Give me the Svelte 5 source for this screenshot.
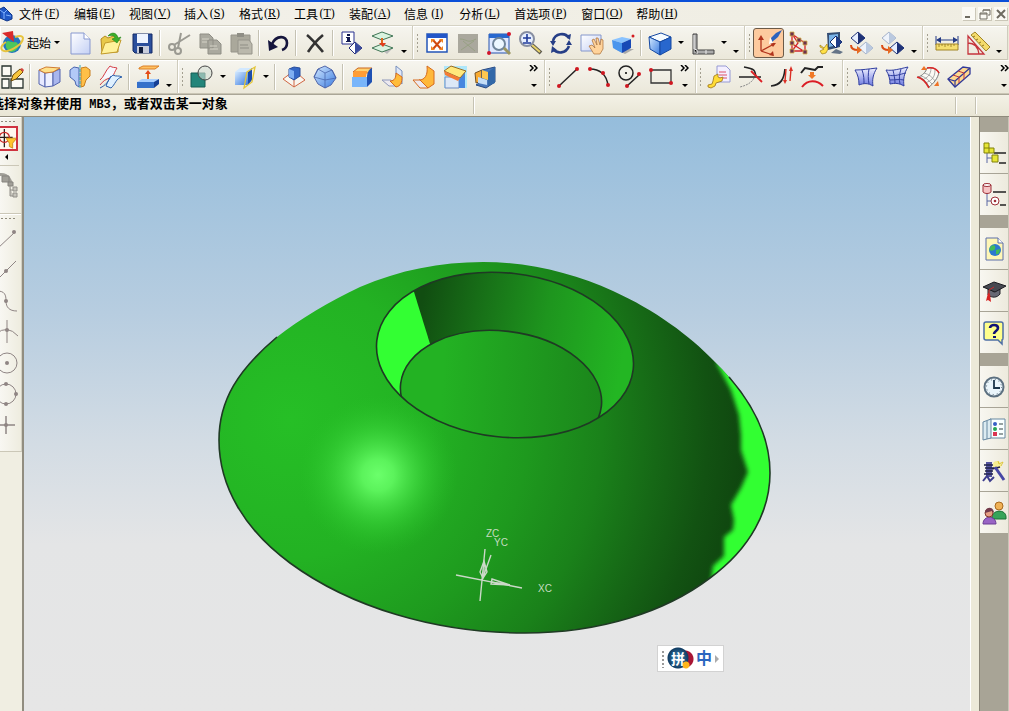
<script>
  const menus = [
    ['文件', 'F'], ['编辑', 'E'], ['视图', 'V'], ['插入', 'S'], ['格式', 'R'], ['工具', 'T'],
    ['装配', 'A'], ['信息', 'I'], ['分析', 'L'], ['首选项', 'P'], ['窗口', 'O'], ['帮助', 'H']
  ];

  // '|' separator, 'v' split arrow, '_' toolbar options, '>>' overflow
  const standardRow = [
    ['start', 'new', 'open', 'save', '|', 'cut', 'copy', 'paste', '|', 'undo', '|', 'delete', '|', 'info', 'layer', '_'],
    ['fit', 'shaded', 'zoomArea', 'zoom', 'rotate', 'pan', 'perspective', '|', 'cube', 'v', 'bracket', 'v', '_'],
    ['wcs', 'constraints', 'display', 'showPart', 'hidePart', '_'],
    ['distance', 'angle', '_']
  ];
  const featureRow = [
    ['sketch', '|', 'extrude', 'revolve', 'sweep', '|', 'datum', '_'],
    ['boolean', 'v', 'trim', 'v', '|', 'draft', 'sphere', '|', 'blend', 'face', 'softBlend', 'chamfer', 'shell', '>>'],
    ['line', 'arc', 'circle', 'rect', '>>'],
    ['editCurve', 'trimCurve', 'offset', 'project', '_'],
    ['ruled', 'mesh', 'swept', 'section', '>>']
  ];
  const snaps = ['endPoint', 'midPoint', 'controlPoint', 'intersection', 'center', 'quadrant', 'point'];
  const tabGroups = [
    ['assembly', 'partNav'],
    ['web', 'training', 'help'],
    ['history', 'palette', 'wizard', 'roles']
  ];

  const icons = {
    new: '<path d="M3 2h13l6 6v15H3z" fill="url(#paper)" stroke="#8798cf"/><path d="M16 2v6h6" fill="#fff" stroke="#8798cf"/>',
    open: '<path d="M2 8l4-3 3 2 8-3 2 4v13L3 22z" fill="#e8c94a" stroke="#b58b20"/><path d="M6 12l16-3-4 12L2 23z" fill="#fff19a" stroke="#c29b2b"/><path d="M9 5c4-5 9-3 10 2l3-1-4 6-5-4 3-1c-1-3-4-3-7-2z" fill="#3cae2c" stroke="#21851a" stroke-width=".6"/>',
    save: '<path d="M3 3h19v19H5l-2-2z" fill="#2b4f9c" stroke="#152b66"/><path d="M7 3h11v9H7z" fill="#eef4ff"/><path d="M7 15h12v7H7z" fill="#c8cddb"/><path d="M9 16h4v6H9z" fill="#101c3a"/>',
    cut: '<g fill="none" stroke="#9b9a92" stroke-width="2"><circle cx="5" cy="16" r="3"/><circle cx="11" cy="20" r="3"/><path d="M7 14L23 4M11 17L14 2"/></g>',
    copy: '<path d="M2 3h9l4 4v10H2zM10 9h9l4 4v10H10z" fill="#aaa99f" stroke="#8f8e85"/><path d="M4 8h7M4 11h5M12 15h7M12 18h8" stroke="#d5d3c7"/>',
    paste: '<path d="M2 4h19v17H2z" fill="#aaa89b" stroke="#96948a"/><path d="M8 2h7v4H8z" fill="#8f8e85"/><path d="M9 9h11l3 4v10H9z" fill="#bab8ac" stroke="#96948a"/><path d="M11 14h8M11 17h9" stroke="#8f8e85"/>',
    undo: '<path d="M6 13C10 4 21 4 21 12c0 4-2 6-5 7" fill="none" stroke="#15153c" stroke-width="2.6"/><path d="M2 9l1 11 9-4z" fill="#15153c"/>',
    delete: '<path d="M4 4c5 4 10 10 16 17M20 4C14 9 9 15 5 21" fill="none" stroke="#333" stroke-width="2.6"/>',
    info: '<path d="M2 1h12v12H2z" fill="#fff" stroke="#29318f"/><path d="M7 3h3v2H7zM6 6h4v4h1v1H6v-1h1V7H6z" fill="#10184e"/><path d="M9 17l6-6 7 6-7 6z" fill="#fff" stroke="#242d79"/><path d="M15 11l7 6-7 6z" fill="#3a4b9e"/>',
    layer: '<path d="M11 19l10-1-5 5z" fill="#bbb"/><path d="M1 5l10-4 11 4-11 4zM1 17l10-4 11 4-11 4z" fill="#d9f3df" stroke="#407555"/><path d="M11 7v7" stroke="#e2641c" stroke-width="2"/><path d="M8 12h7l-3 4z" fill="#e23d1c"/>',
    fit: '<path d="M2 3h20v18H2z" fill="#fff" stroke="#2356b8" stroke-width="1.5"/><path d="M2 3h20v4H2z" fill="#2356c8"/><path d="M8 9l8 9M16 9l-8 9" stroke="#d1480d" stroke-width="2"/><path d="M6 8h4l-4 4zM18 8h-4l4 4zM6 19h4l-4-4zM18 19h-4l4-4z" fill="#ef8423"/>',
    shaded: '<path d="M2 3h20v19H2z" fill="#aaa89d"/><path d="M4 8c7 0 7 5 16 0M5 19l13-9M7 10l12 10" fill="none" stroke="#98a184"/>',
    zoomArea: '<path d="M2 3h20v19H2z" fill="#dfe9ff" stroke="#2752ad"/><path d="M2 3h20v4H2z" fill="#2868ce"/><circle cx="12" cy="13" r="6" fill="#ecf7ff" stroke="#71869b" stroke-width="2"/><path d="M17 17l6 6" stroke="#9b9660" stroke-width="3"/><g fill="#d2152b"><circle cx="22" cy="3" r="2"/><circle cx="2" cy="22" r="2"/></g>',
    zoom: '<path d="M14 14l9 8" stroke="#5d5a50" stroke-width="4"/><path d="M14 14l8 7" stroke="#e8d36c" stroke-width="2"/><circle cx="9" cy="8" r="7" fill="#e6efff" stroke="#888fa1" stroke-width="2"/><path d="M5 7h8M9 3v8M5 12h8" stroke="#203b9a" stroke-width="1.6"/>',
    rotate: '<g fill="none" stroke="#263e86" stroke-width="2.6"><path d="M4 10C6 2 16 1 20 7M20 15c-3 8-12 8-16 3"/></g><path d="M1 10h6l-3 5zM17 14h6l-3-5zM3 15l-1 7 6-3zM16 5l5 4 1-6z" fill="#263e86"/>',
    pan: '<path d="M1 4h20v16H1z" fill="url(#paper)" stroke="#8497cc"/><path d="M9 15l3-1 3 3-3-8 2-1 3 6-1-7h2l2 7 1-6 2 1v9l-3 5h-6z" fill="#ffd39b" stroke="#a96d33" stroke-width=".7"/>',
    perspective: '<path d="M4 18l10 5 9-5" fill="#aaa"/><path d="M1 9l10-3 9 2-9 4z" fill="#8ac3ff"/><path d="M1 9l10 3v10L2 17z" fill="#4a95ed"/><path d="M11 12l9-4v9l-9 5z" fill="#1849b6"/><circle cx="22" cy="5" r="1.5" fill="#d31b21"/>',
    cube: '<path d="M1 6l12-4 10 4-11 5z" fill="#f5fbff" stroke="#1549a2"/><path d="M1 6l11 5v13L2 18z" fill="url(#blue)" stroke="#1549a2"/><path d="M12 11l11-5v12l-11 6z" fill="#2867ce" stroke="#1549a2"/>',
    bracket: '<path d="M2 3h4v16h17v4H2z" fill="#aaa" stroke="#444"/><path d="M3 18l3 1v4M15 19v4M3 4v14" stroke="#eee"/>',
    wcs: '<path d="M4 20V6M4 20l12 4M4 20l13-7" fill="none" stroke="#b2341c" stroke-width="1.3"/><path d="M1 9l3-5 3 5zM13 12h6l-3 4zM12 24l4-4 1 5z" fill="#b2341c"/><path d="M14 7l5-5 6-3-4 7-6 5z" fill="#2c62bd"/><path d="M13 6l3 6-4 1z" fill="#fff"/>',
    constraints: '<path d="M4 3v17h13V12L4 3M3 12l14 9M4 3l6 9-6 8" fill="none" stroke="#d4262a" stroke-width="1.3"/><g fill="#6d324e" stroke="#d8b14e" stroke-width=".8"><path d="M2 1h4v4H2zM2 10h4v4H2zM2 18h4v4H2zM9 7h4v4H9zM15 10h4v4h-4zM15 19h4v4h-4z"/></g>',
    display: '<path d="M8 2l13-1v15l-12 3z" fill="#344e74"/><path d="M10 4l9-1v11l-9 2z" fill="#79b3e8"/><path d="M12 22l5-4 7 3-3 2z" fill="#657487"/><path d="M11 11l6-6 6 6-6 6z" fill="#fff" stroke="#142a6c"/><path d="M17 5l6 6-6 6z" fill="#203d88"/><path d="M1 14l4 3 3-4 1 5-2 4-4 1-2-3 4-2-4-2z" fill="#ffe146" stroke="#a17e12" stroke-width=".7"/>',
    showPart: '<path d="M1 7l7-6 7 6-7 6z" fill="#e7efff" stroke="#1f3277"/><path d="M8 1l7 6-7 6z" fill="#1f3277"/><path d="M9 17l7-6 7 6-7 6z" fill="#eef3fb" stroke="#a4b1c9"/><path d="M16 11l7 6-7 6z" fill="#bac9df"/><path d="M1 14c0 4 3 5 7 5" fill="none" stroke="#dc4d16" stroke-width="2"/><path d="M7 15l5 4-5 4z" fill="#e66b22"/>',
    hidePart: '<path d="M1 7l7-6 7 6-7 6z" fill="#eef3fb" stroke="#a4b1c9"/><path d="M8 1l7 6-7 6z" fill="#bac9df"/><path d="M9 17l7-6 7 6-7 6z" fill="#e7efff" stroke="#1f3277"/><path d="M16 11l7 6-7 6z" fill="#1f3277"/><path d="M1 14c0 4 3 5 7 5" fill="none" stroke="#dc4d16" stroke-width="2"/><path d="M7 15l5 4-5 4z" fill="#e66b22"/>',
    distance: '<path d="M1 5v9M23 5v9M2 9h20" stroke="#253b85"/><path d="M1 9l5-3v6zM23 9l-5-3v6z" fill="#253b85"/><path d="M1 13h22v6H1z" fill="#f6df70" stroke="#a28527"/><path d="M4 13v3M7 13v2M10 13v3M13 13v2M16 13v3M19 13v2" stroke="#937420" stroke-width=".8"/>',
    angle: '<path d="M2 5v18h16zM2 12c7 0 10 4 11 11" fill="none" stroke="#c5343c" stroke-width="1.3"/><path d="M5 4l4-3 15 15-4 4z" fill="#f4dc6c" stroke="#a28527"/><path d="M9 5l-2 1M12 8l-2 1M15 11l-2 1M18 14l-2 1" stroke="#937420"/>',
    sketch: '<g fill="#fbfaf4" stroke="#29332e" stroke-width="1.3"><path d="M2 1h9v10H2zM2 14h7v9H2zM11 14h12v9H11z"/></g><path d="M11 16l2-6 7-6 3 3-7 7z" fill="#f8c53c" stroke="#704c0a"/><path d="M20 4l3 3 1-2-2-2z" fill="#d54740"/>',
    extrude: '<path d="M2 5l6 3v14l-6-3z" fill="#e7e9ff" stroke="#5262ad"/><path d="M8 8l8-1v14l-8 1z" fill="#eef0ff" stroke="#5262ad"/><path d="M16 7l7-3v13l-7 4z" fill="#a9b6ed" stroke="#5262ad"/><path d="M2 5l7-3 14 1-7 4-8 1z" fill="#ffe18b" stroke="#d07c33"/>',
    revolve: '<path d="M2 5l4-3 5 1v19l-3-2-1-4-5-4z" fill="#b3c9f7" stroke="#4a65ae"/><path d="M13 3l5-1 4 3v6l-4 4-2 6-3 1z" fill="#ffc048" stroke="#c77e20"/><path d="M12 0v24" stroke="#30a5ae" stroke-dasharray="3 1"/>',
    sweep: '<path d="M1 15C5 12 6 6 11 1c3 2 4 1 7 2-2 3-3 6-4 8" fill="#f7f7ff" stroke="#d43d44"/><path d="M7 21c2-5 3-8 7-11 3 2 6 0 9 2-6 1-7 8-11 11z" fill="#dff0ff" stroke="#295eac"/><path d="M1 20c3-4 6-6 10-7" fill="none" stroke="#d43d44"/><path d="M1 23c6-3 8-6 11-12" fill="none" stroke="#295eac"/>',
    datum: '<path d="M3 3l4-2h16l-4 3H3z" fill="#ffc163" stroke="#dc7f25"/><path d="M12 14V8" stroke="#e3681c" stroke-width="2"/><path d="M9 9l3-4 3 4z" fill="#e3481c"/><path d="M1 17l5-3h17l-5 4H1z" fill="#a5cdff"/><path d="M1 17h17v6H1z" fill="#3470ca"/><path d="M18 17l5-3v5l-5 4z" fill="#163f94"/>',
    boolean: '<path d="M1 8h14v14H1z" fill="#23857a" stroke="#175c55"/><circle cx="15" cy="8" r="7" fill="#d3ddd4" fill-opacity=".6" stroke="#444"/>',
    trim: '<path d="M2 7l5-4h12l-4 4z" fill="#d2e8ff"/><path d="M2 7h13v13H2z" fill="url(#blue)"/><path d="M15 7l4-4v12l-4 5z" fill="#1c4cab"/><path d="M11 23L14 7l8-5-3 15z" fill="none" stroke="#e4c63a" stroke-width="1.3"/>',
    draft: '<path d="M1 14l8-6 7 1 7 6-11 7z" fill="#f9f6ef" stroke="#d06643"/><path d="M12 22v-8" stroke="#d06643"/><path d="M7 4l5-2 6 1v8l-6 4-5-3z" fill="#3567c5" stroke="#284c9b"/><path d="M7 4l5 2v8l-5-2z" fill="#7faef2"/>',
    sphere: '<path d="M1 12l4-8 7-3 7 4 4 8-5 7-6 3-7-4z" fill="url(#blue)" stroke="#5267aa"/><path d="M1 12l11 3 11-2M5 4l7 4 7-3M12 8v15M5 4l-4 8M19 5l4 8" fill="none" stroke="#415ca5" stroke-width=".7"/>',
    blend: '<path d="M3 7l5-4h14l-4 5z" fill="#ffd170" stroke="#cb661f"/><path d="M3 8c0-1 1-2 3-2h11l-1 6H3z" fill="#ff9d36"/><path d="M2 12h15v10H2z" fill="#78b5fa"/><path d="M17 12c0-4 2-8 5-9v14l-5 5z" fill="#1e51b3"/>',
    face: '<path d="M15 1l6 5v13l-6-5z" fill="#e0e8f8" stroke="#778fbd"/><path d="M1 15h9l7 6H8z" fill="#ece9ef" stroke="#8e98bb"/><path d="M9 16c5 0 6-4 6-8l6 4c0 5-1 9-6 10z" fill="#ffbc3b" stroke="#d66a1e"/>',
    softBlend: '<path d="M15 1l7 5v13l-6 4c-3-3-6-6-9-8 6 0 9-5 8-14z" fill="#ffb83a" stroke="#d66a1e"/><path d="M1 15h7l8 8H8z" fill="#ece9ef" stroke="#d66a1e"/>',
    chamfer: '<path d="M1 1h23v22H1z" fill="#aee7fa"/><path d="M2 12h14v11H2z" fill="#dce8f7" stroke="#6c8bc1"/><path d="M16 12l6-7v18h-6z" fill="#4787df"/><path d="M1 6l7-5 15 5-6 7z" fill="#ffe87c" stroke="#986b24"/><path d="M1 6l16 7-2 3L2 10z" fill="#f47b35"/>',
    shell: '<path d="M1 8l7-3v11l-6 2z" fill="#f8aa30" stroke="#765325"/><path d="M8 5l13-3v15l-9 6-10-3 6-4z" fill="#4878bd" stroke="#294b83"/><path d="M4 12l9 3v5l-9-2z" fill="#c3ddf7"/><path d="M8 5l6 2v8l-6-2z" fill="#ffc750"/><path d="M14 7l7-5v16l-7 3z" fill="#3268a8"/>',
    line: '<path d="M3 21L21 4" stroke="#222" stroke-width="1.5"/><g fill="#cf1720"><circle cx="3" cy="21" r="2"/><circle cx="21" cy="4" r="2"/></g>',
    arc: '<path d="M3 4c9 0 17 5 18 17" fill="none" stroke="#222" stroke-width="1.5"/><g fill="#cf1720"><circle cx="3" cy="4" r="2"/><circle cx="16" cy="8" r="2"/><circle cx="21" cy="20" r="2"/></g>',
    circle: '<circle cx="8" cy="8" r="7" fill="none" stroke="#222" stroke-width="1.5"/><circle cx="8" cy="8" r="1"/><path d="M9 21L21 10" stroke="#222" stroke-width="1.5"/><g fill="#cf1720"><circle cx="9" cy="21" r="2"/><circle cx="21" cy="9" r="2"/></g>',
    rect: '<path d="M2 5h20v13H2z" fill="none" stroke="#333" stroke-width="1.3"/><g fill="#cf1720"><circle cx="2" cy="5" r="2"/><circle cx="22" cy="18" r="2"/></g>',
    editCurve: '<path d="M10 1h9l4 4v12H10z" fill="#f4efff" stroke="#969ad3"/><path d="M12 7h7M12 10h8M12 13h8" stroke="#e05166"/><path d="M1 20l4-1 1-3 1-5 4-2 0 3 2 1 3-1-1 4-6 2-1 3-4 2-3-1z" fill="#ffdc35" stroke="#9d751b" stroke-width=".8"/>',
    trimCurve: '<path d="M1 12h22M6 2c11 2 11 3 12 10" fill="none" stroke="#222" stroke-width="1.5"/><path d="M16 13c-2 4-6 7-14 9" fill="none" stroke="#888" stroke-dasharray="2 1"/><path d="M13 6l11 11" stroke="#dd2025" stroke-width="1.8"/>',
    offset: '<path d="M2 21c10-1 13-7 14-17" fill="none" stroke="#222" stroke-width="1.7"/><path d="M17 4l-1 12M22 4l-1 12" stroke="#db3026" stroke-width="1.4"/><path d="M14 15l2 4 2-4zM20 6l2-5 2 5z" fill="#db3026"/>',
    project: '<path d="M1 8l4-5 5 1 5 1 3-3h5" fill="none" stroke="#222" stroke-width="2"/><path d="M2 22c6-8 15-7 21-1" fill="none" stroke="#db1c24" stroke-width="2"/><path d="M10 7h4v3h2l-4 4-4-4h2z" fill="#f07926"/>',
    ruled: '<path d="M1 5c7 0 13-1 22-2-4 6-5 12-4 18-5-3-9-3-14-1 0-6-1-10-4-15z" fill="url(#violet)" stroke="#303ea0"/><path d="M8 5c2 5 2 10 2 14M15 4c-1 5-1 10 0 15" fill="none" stroke="#303ea0"/>',
    mesh: '<path d="M1 5c7 1 13-1 22-3-4 6-5 13-4 19-5-3-9-3-14-2 0-5-1-9-4-14z" fill="url(#violet)" stroke="#303ea0"/><path d="M8 5c1 5 2 9 2 13M16 4c-2 6-2 10-1 15M3 10c7 2 12-1 18-2M5 15c5 0 9-1 14 0" fill="none" stroke="#303ea0"/>',
    swept: '<path d="M2 12C6 11 10 7 11 3c5-1 9 1 12 4-1 6-5 11-10 15-3-6-6-9-11-10z" fill="#fbfaf5" stroke="#777"/><path d="M5 11c5 1 8 5 11 8M8 8c5 1 9 5 11 8M15 3c0 7-4 10-9 12M19 5c0 8-4 11-10 13" fill="none" stroke="#888" stroke-width=".7"/><path d="M1 12c5 1 9 5 12 11M11 3c6-1 10 1 12 5" fill="none" stroke="#db2525" stroke-width="1.6"/><path d="M5 5l3-4 3 4zM18 21l4-5 1 5z" fill="#ef7226"/>',
    section: '<path d="M1 14L16 2l7 1v6L8 22z" fill="#ffd98f" stroke="#303899" stroke-width="1.3"/><path d="M1 14l7 2L23 3M8 16v6" fill="none" stroke="#303899" stroke-width="1.2"/><path d="M6 10l6 2v6M11 6l6 2v6" fill="none" stroke="#bd3740"/>',
    filter: '<g fill="none" stroke="#241b1b" stroke-width="1.5"><path d="M10 0v22M0 10h20"/></g><circle cx="10" cy="10" r="6" fill="none" stroke="#c82424" stroke-width="1.5"/><path d="M12 11h13l-5 6v6l-4-2v-4z" fill="#ffc52d" stroke="#c98514"/>',
    path: '<path d="M3 1c7-2 12 1 14 8" fill="none" stroke="#a19f98" stroke-width="3"/><path d="M8 2h7v6H8zM14 8h5v4h-5z" fill="#a19f98" stroke="#85837e"/><path d="M16 12v10h3M16 16h3M19 13h4v4h-4zM19 19h4v4h-4z" fill="#c6c4bc" stroke="#92908a"/>',
    endPoint: '<path d="M3 22L20 6" stroke="#8f8584"/><circle cx="20" cy="5" r="2"/>',
    midPoint: '<path d="M3 22L22 3" stroke="#8f8584"/><circle cx="12" cy="13" r="2"/>',
    controlPoint: '<path d="M3 2c8 0 9 4 9 10s3 10 11 10" fill="none" stroke="#8f8584"/><circle cx="12" cy="12" r="2"/>',
    intersection: '<path d="M13 0v23M2 14Q13 4 24 16" fill="none" stroke="#8f8584"/><circle cx="13" cy="10" r="2"/>',
    center: '<circle cx="13" cy="12" r="10" fill="none" stroke="#8f8584"/><circle cx="13" cy="12" r="2"/>',
    quadrant: '<circle cx="12" cy="12" r="10" fill="none" stroke="#8f8584"/><circle cx="12" cy="2" r="2"/><circle cx="22" cy="12" r="2"/><circle cx="12" cy="22" r="2"/>',
    point: '<path d="M12 3v18M4 12h17" stroke="#8f8584" stroke-width="1.5"/><circle cx="12" cy="12" r="2"/>',
    assembly: '<path d="M5 10v12M5 17h5" stroke="#5a68a4"/><path d="M12 12h12M17 22h7" stroke="#222" stroke-width="1.5"/><path d="M2 2h5v5h5v5H2zM2 7h5v5M10 14h6v7h-6z" fill="#e6e635" stroke="#80800b"/>',
    partNav: '<path d="M5 10v13M5 18h4" stroke="#5a68a4"/><path d="M11 9h13M18 22h6" stroke="#222" stroke-width="1.5"/><path d="M1 2v7c2 2 6 2 8 0V2z" fill="#f6c4c4" stroke="#9d3039"/><ellipse cx="5" cy="2" rx="4" ry="1.5" fill="#fff" stroke="#9d3039"/><circle cx="13" cy="18" r="4" fill="#fff" stroke="#9d3039"/><circle cx="13" cy="18" r="1.3" fill="#9d3039"/>',
    web: '<path d="M4 1h12l5 5v17H4z" fill="#fff7b6" stroke="#5d6fa8"/><path d="M16 1v5h5" fill="#fff" stroke="#5d6fa8"/><circle cx="13" cy="13" r="6" fill="#2c79ce"/><path d="M9 9c4-2 5 1 4 3s-4 2-6 1zM14 13l4-1c0 4-2 6-4 5z" fill="#42bd57"/>',
    training: '<path d="M6 9v7c4 3 9 3 12-1V9l-6 4z" fill="#666873" stroke="#24252a"/><path d="M1 8l11-5 12 4-11 6z" fill="#474951" stroke="#1c1d22"/><path d="M12 8l-5 3v5" fill="none" stroke="#cc2929"/><path d="M6 14l2 1 1 8-3-2-2 1z" fill="#d72424"/>',
    help: '<path d="M4 1h15q2 0 2 2v14q0 2-1 2v4l-4-4H4q-2 0-2-2V3q0-2 2-2z" fill="#ffff8b" stroke="#4e6fa4" stroke-width="1.5"/><path d="M8 7c0-4 8-4 8 0 0 3-4 3-4 6" fill="none" stroke="#111375" stroke-width="2.6"/><path d="M11 15h3v2h-3z" fill="#111375"/>',
    history: '<circle cx="12" cy="12" r="9.5" fill="#eaf5fb" stroke="#5c7080" stroke-width="2"/><circle cx="12" cy="12" r="7.5" fill="none" stroke="#536775" stroke-dasharray="1 3"/><path d="M12 5v8h6" fill="none" stroke="#1c364b" stroke-width="1.8"/>',
    palette: '<path d="M8 2h15v19H8z" fill="#f8ffff" stroke="#6788a1"/><path d="M1 5l8-3v19l-8 2zM5 4v18" fill="#dcebf1" stroke="#6788a1"/><circle cx="13" cy="7" r="2" fill="#345ec6"/><circle cx="13" cy="12" r="2" fill="#24a554"/><path d="M11 15h4v4h-4z" fill="#da3451"/><path d="M17 7h4M17 12h4M17 17h4" stroke="#344"/>',
    wizard: '<circle cx="15" cy="6" r="4" fill="#f6ef91"/><path d="M4 3h6v15H4z" fill="#54549e"/><path d="M2 6h9M3 9h9M3 12h8M2 15h9M10 10l8-2" stroke="#222349" stroke-width="1.3"/><path d="M13 8l9 13" stroke="#4747a5" stroke-width="3"/><path d="M1 22l4-5 3 5 4-4" fill="none" stroke="#3c3c8c" stroke-width="2"/><path d="M16 2l1 3 4-2-2 4" stroke="#dfc73a" fill="none"/>',
    roles: '<path d="M10 17c0-9 14-9 14-1v2H11z" fill="#36a45a" stroke="#1b7138"/><circle cx="17" cy="5" r="4" fill="#f0b255" stroke="#a86b1e"/><path d="M1 23c0-9 13-9 13 0z" fill="#9964c5" stroke="#6a3d94"/><circle cx="7" cy="12" r="4" fill="#e7a184" stroke="#82382b"/><path d="M3 12c0-7 9-7 9 0l-2-2z" fill="#733b4b"/>'
  };
</script>

{#snippet icon(name)}
  <svg class="icon" viewBox="0 0 24 24" aria-hidden="true">{@html icons[name]}</svg>
{/snippet}

{#snippet group(items, grip)}
  <div class="group" class:stretch={items.includes('shell') || items.includes('mesh')}>
    {#if grip}<span class="grip"></span>{/if}
    {#each items as item}
      {#if item === '|'}
        <span class="sep"></span>
      {:else if item === 'v'}
        <button class="split" aria-label="更多"><i class="caret"></i></button>
      {:else if item === '_'}
        <button class="split options" aria-label="工具条选项"><i class="caret"></i></button>
      {:else if item === '>>'}
        <button class="split overflow" aria-label="工具条选项">
          <svg width="9" height="7" viewBox="0 0 9 7"><path d="M1 0l3 3-3 3M5 0l3 3-3 3" fill="none" stroke="#000" stroke-width="1.5" /></svg>
          <i class="caret"></i>
        </button>
      {:else if item === 'start'}
        <button class="start">
          <svg class="icon" viewBox="0 0 24 24" aria-hidden="true">
            <circle cx="12" cy="13" r="9" fill="#2276bd" />
            <path d="M7 10c4 0 5 2 9 1l3 3c-1 4-4 7-8 7-4-2-7-5-4-11z" fill="#4dc75c" />
            <path d="M2 2l11-2 1 11z" fill="#d92b2b" />
            <path d="M2 19c5 4 21-5 21-12-1-3-5-2-8-1M2 19c-2-3 1-6 4-8" fill="none" stroke="#e7c43e" stroke-width="2" />
          </svg>
          <span>起始</span>
          <i class="caret"></i>
        </button>
      {:else}
        <button class="tool" class:active={item === 'wcs'} aria-label={item}>{@render icon(item)}</button>
      {/if}
    {/each}
  </div>
{/snippet}

<svg class="defs" aria-hidden="true">
  <defs>
    <linearGradient id="paper" x2="1" y2="1"><stop stop-color="#fff" /><stop offset="1" stop-color="#c4d0f5" /></linearGradient>
    <linearGradient id="blue" x2="1" y2="1"><stop stop-color="#d5eaff" /><stop offset="1" stop-color="#3a7be0" /></linearGradient>
    <linearGradient id="violet" x2="0" y2="1"><stop stop-color="#eef0ff" /><stop offset="1" stop-color="#6b78e0" /></linearGradient>
  </defs>
</svg>

<div class="app">
  <header>
    <nav class="menubar">
      <svg class="app-icon" width="13" height="16" viewBox="0 0 13 16" aria-hidden="true">
        <path d="M0 3l4-2 3 3 5 5v4l-5 2-7-3z" fill="#1f57c5" stroke="#12388b" />
        <path d="M0 4l4 3 3-3M4 7v6M6 9l5 1" fill="none" stroke="#82b3ff" />
      </svg>
      {#each menus as [name, key]}
        <button class="menu">{name}<span class="key">(<u>{key}</u>)</span></button>
      {/each}
      <div class="window-buttons">
        <button aria-label="最小化"><svg viewBox="0 0 12 12"><path d="M2 9h5" stroke="#6e6b61" stroke-width="2" /></svg></button>
        <button aria-label="还原"><svg viewBox="0 0 12 12"><path d="M4 4V2h7v5H9M1 5h7v6H1zM1 6h7M4 2h7" fill="none" stroke="#6e6b61" /></svg></button>
        <button aria-label="关闭"><svg viewBox="0 0 12 12"><path d="M2 2l8 8M10 2l-8 8" stroke="#6e6b61" stroke-width="2" /></svg></button>
      </div>
    </nav>
    <div class="toolbar">
      {#each standardRow as items, i}{@render group(items, i > 0)}{/each}
    </div>
    <div class="toolbar features">
      {#each featureRow as items, i}{@render group(items, i > 0)}{/each}
    </div>
    <div class="prompt">
      <p>选择对象并使用<span>{' MB3'}</span>，或者双击某一对象</p>
      <div class="status"></div>
      <div class="cell"></div>
      <div class="cell last"></div>
    </div>
  </header>

  <main>
    <aside class="selection">
      <div class="side-group">
        <span class="hgrip"></span>
        <button class="snap filter" aria-label="选择过滤器">{@render icon('filter')}</button>
        <button class="flyout" aria-label="展开"><i></i></button>
        <span class="hsep"></span>
        <button class="snap path" aria-label="路径">{@render icon('path')}</button>
      </div>
      <div class="side-group snaps">
        <span class="hgrip"></span>
        {#each snaps as name}
          <button class="snap" aria-label={name}>{@render icon(name)}</button>
        {/each}
      </div>
    </aside>

    <section class="viewport">
      <svg class="model" viewBox="24 117 946 594" role="img" aria-label="实体模型">
        <defs>
          <radialGradient id="dome" gradientUnits="userSpaceOnUse" cx="290" cy="420" r="460">
            <stop stop-color="#26bf26" />
            <stop offset=".3" stop-color="#23b223" />
            <stop offset=".52" stop-color="#1e991e" />
            <stop offset=".68" stop-color="#1a811a" />
            <stop offset=".8" stop-color="#166816" />
            <stop offset=".91" stop-color="#125212" />
            <stop offset="1" stop-color="#0f450f" />
          </radialGradient>
          <radialGradient id="shine" gradientUnits="userSpaceOnUse" cx="378" cy="475" r="80">
            <stop stop-color="#6bff6b" />
            <stop offset=".2" stop-color="#62fa62" stop-opacity=".9" />
            <stop offset=".6" stop-color="#40dc40" stop-opacity=".45" />
            <stop offset="1" stop-color="#26bf26" stop-opacity="0" />
          </radialGradient>
          <linearGradient id="wall" gradientUnits="userSpaceOnUse" x1="420" y1="310" x2="625" y2="350">
            <stop stop-color="#114d11" />
            <stop offset=".3" stop-color="#187218" />
            <stop offset=".6" stop-color="#1e951e" />
            <stop offset="1" stop-color="#23b623" />
          </linearGradient>
          <linearGradient id="floor" gradientUnits="userSpaceOnUse" x1="-60" y1="-10" x2="102" y2="-20">
            <stop stop-color="#23b223" />
            <stop offset="1" stop-color="#1b851b" />
          </linearGradient>
          <filter id="soft" x="-20%" y="-20%" width="140%" height="140%"><feGaussianBlur stdDeviation="2" /></filter>
          <clipPath id="body">
            <path d="M219 440C219 400 238 370 277 337C300 319 330 301 360 287C400 270 440 262 483 262C530 262 575 274 613 291C655 310 690 336 713 360C750 396 770 434 770 473C770 510 751 548 710 578C665 612 600 633 525 633C435 633 350 607 290 563C245 530 219 487 219 440Z" />
          </clipPath>
          <clipPath id="hole"><ellipse rx="129" ry="82" transform="translate(505 355) rotate(6.5)" /></clipPath>
        </defs>

        <g clip-path="url(#body)">
          <path d="M210 250h570v390H210z" fill="url(#dome)" />
          <circle cx="378" cy="475" r="80" fill="url(#shine)" />
          <path d="M716 362L731 390L739 415L741 435L741 450L748 472L741 488L731 505L734 520L733 530L724 537L724 556L713 566L710 590H790V362Z" fill="#33ff33" filter="url(#soft)" />
        </g>
        <path class="edge" d="M277 337C238 370 219 400 219 440C219 487 245 530 290 563C350 607 435 633 525 633C600 633 665 612 710 578C751 548 770 510 770 473C770 439 755 407 729 377" />

        <g clip-path="url(#hole)">
          <path d="M370 265h270v180H370z" fill="url(#wall)" />
          <path d="M360 260h43l11 32l17 55v80h-71z" fill="#33ff33" />
          <ellipse class="floor" rx="101" ry="64" transform="translate(501 395) rotate(6.5)" />
        </g>
        <ellipse class="edge" rx="129" ry="82" transform="translate(505 355) rotate(6.5)" />

        <g class="triad">
          <path d="M456 575L522 588M485 549L480 601M491 555L482 580" />
          <path d="M492 579L491 584L510 585ZM491 582L510 585M480 572L484 561L487 572L483 578ZM484 561V576" />
          <text x="486" y="537">ZC</text>
          <text x="494" y="546">YC</text>
          <text x="538" y="592">XC</text>
        </g>
      </svg>

      <div class="ime">
        <span class="ime-grip"></span>
        <button class="ime-logo" aria-label="输入法">拼</button>
        <button class="ime-mode">中</button>
        <i class="ime-arrow"></i>
      </div>
    </section>

    <aside class="resources">
      {#each tabGroups as tabs}
        <div class="tabs">
          {#each tabs as name}
            <button aria-label={name}>{@render icon(name)}</button>
          {/each}
        </div>
      {/each}
    </aside>
  </main>
</div>

<style>
  :global(body) {
    margin: 0;
    overflow: hidden;
  }
  .app {
    height: 100vh;
    display: flex;
    flex-direction: column;
    overflow: hidden;
    background: #ece9d8;
    font-family: "Liberation Sans", "Noto Sans CJK SC", sans-serif;
    font-size: 12px;
    color: #000;
  }
  .defs {
    position: absolute;
    width: 0;
    height: 0;
  }
  button {
    display: flex;
    align-items: center;
    justify-content: center;
    flex: none;
    margin: 0;
    padding: 0;
    border: 0;
    background: none;
    color: inherit;
    font: inherit;
  }
  .icon {
    display: block;
    flex: none;
    width: 24px;
    height: 24px;
    overflow: visible;
  }

  header {
    flex: none;
    border-top: 2px solid #0a4fd8;
  }
  .menubar {
    display: flex;
    align-items: center;
    height: 23px;
    border-bottom: 1px solid #d5d2c4;
    background: linear-gradient(90deg, #f3f1ea, #efede2);
  }
  .app-icon {
    flex: none;
  }
  .menu {
    height: 22px;
    padding: 0 7px 0 6px;
    white-space: nowrap;
  }
  .key {
    width: 18px;
    text-align: center;
    font-family: "Liberation Serif", serif;
    font-size: 12px;
  }
  .window-buttons {
    display: flex;
    gap: 3px;
    margin: 0 2px 0 auto;
  }
  .window-buttons button {
    width: 13px;
    height: 13px;
    background: #faf9f4;
    box-shadow: 1px 1px 0 #cbc7b8;
  }
  .window-buttons svg {
    width: 12px;
    height: 12px;
  }

  .toolbar {
    display: flex;
    height: 34px;
  }
  .group {
    display: flex;
    flex: none;
    box-sizing: border-box;
    padding-right: 2px;
    border-right: 1px solid #cfccbd;
    border-bottom: 1px solid #c9c5b4;
    background: linear-gradient(#f6f5ef, #ebe8da);
    box-shadow: inset 0 1px #fff, inset 1px 0 #fff;
  }
  .group.stretch {
    flex: 1 0 auto;
  }
  .features .group:first-child {
    padding-left: 27px;
    margin-left: -31px;
  }
  .features .group:last-child {
    padding-right: 0;
    border-right: 0;
  }
  .grip {
    flex: none;
    width: 3px;
    margin: 7px 2px 5px 3px;
    background: radial-gradient(circle, #a39f90 1px, transparent 1px) 0 0 / 3px 4px;
  }
  .sep {
    flex: none;
    width: 1px;
    margin: 4px 2px 3px 2px;
    border-right: 1px solid #fff;
    background: #c5c2b3;
  }
  .tool {
    box-sizing: border-box;
    width: 31px;
    height: 34px;
  }
  .tool.active {
    height: 30px;
    margin-top: 2px;
    border: 1px solid #6b5a48;
    border-radius: 3px;
    background: #fdca9e;
  }
  .start {
    width: 64px;
    justify-content: flex-start;
    gap: 3px;
  }
  .caret {
    width: 0;
    height: 0;
    border: 3px solid transparent;
    border-top-color: #000;
    border-bottom: 0;
  }
  .split {
    width: 12px;
  }
  .options {
    align-items: flex-end;
    padding-bottom: 6px;
  }
  .overflow {
    flex-direction: column;
    justify-content: space-between;
    width: 16px;
    margin-left: auto;
    padding: 5px 0 6px;
  }
  .features .group:last-child .overflow {
    width: 10px;
  }

  .prompt {
    display: flex;
    align-items: stretch;
    box-sizing: border-box;
    height: 23px;
    border-top: 1px solid #aaa697;
    border-bottom: 1px solid #8f8b7c;
    background: linear-gradient(#f3f1e6, #e9e6d5);
  }
  .prompt p {
    flex: 1;
    margin: 0 0 0 -9px;
    font-size: 13px;
    font-weight: bold;
    line-height: 17px;
    white-space: pre;
  }
  .prompt p span {
    font-family: "Liberation Mono", monospace;
    font-size: 12px;
  }
  .status,
  .cell {
    flex: 1;
    margin: 2px 0;
    border-left: 1px solid #c5c2b3;
    box-shadow: inset 1px 0 #fff;
  }
  .cell {
    flex: none;
    width: 19px;
  }
  .cell.last {
    width: 33px;
  }

  main {
    flex: 1;
    display: flex;
    min-height: 0;
  }
  .selection {
    flex: none;
    width: 22px;
    border-right: 2px solid #918d80;
    overflow: hidden;
    background: #f0eee2;
  }
  .side-group {
    display: flex;
    flex-direction: column;
    padding-bottom: 12px;
    border-right: 1px solid #d3d0c2;
    border-bottom: 1px solid #cbc7b7;
    background: linear-gradient(90deg, #f8f7f2, #eeecdf);
    box-shadow: inset 0 1px #fff;
  }
  .side-group.snaps {
    padding-bottom: 11px;
  }
  .hgrip {
    height: 3px;
    margin: 3px 4px 3px 0;
    background: radial-gradient(circle, #8f8b7d 1px, transparent 1px) 0 0 / 4px 3px;
  }
  .snap {
    width: 24px;
    height: 31px;
    margin-left: -6px;
    fill: #8f8584;
  }
  .snap.filter {
    box-sizing: border-box;
    height: 25px;
    overflow: hidden;
    border: 2px solid #cf3340;
    background: #fff7ef;
  }
  .snap.filter .icon {
    width: 20px;
    height: 20px;
  }
  .flyout {
    height: 12px;
    width: 12px;
  }
  .flyout i {
    border: 3px solid transparent;
    border-right-color: #000;
    border-left: 0;
  }
  .hsep {
    height: 1px;
    margin: 2px 2px 4px 0;
    background: #cbc7b7;
  }

  .viewport {
    position: relative;
    flex: 1;
    min-width: 0;
    border-right: 1px solid #fff;
    background: linear-gradient(#95bddc, #b7cde0 33%, #d3dce4 55%, #e4e5e6 72%, #e6e6e6);
  }
  .model {
    display: block;
    width: 100%;
    height: 100%;
  }
  .edge {
    fill: none;
    stroke: #1f3a24;
    stroke-width: 1.6;
  }
  .floor {
    fill: url(#floor);
    stroke: #1f3a24;
    stroke-width: 1.6;
  }
  .triad path {
    fill: none;
    stroke: #cbd8c8;
    stroke-width: 1.4;
  }
  .triad text {
    fill: #c4dcc0;
    font-size: 10px;
  }

  .ime {
    position: absolute;
    right: 247px;
    bottom: 40px;
    display: flex;
    align-items: center;
    gap: 3px;
    height: 25px;
    padding: 0 4px;
    background: #fff;
    box-shadow: 0 0 0 1px #d2d2d2;
  }
  .ime-grip {
    width: 2px;
    height: 18px;
    background: radial-gradient(circle, #999 1px, transparent 1px) 0 0 / 2px 4px;
  }
  .ime-logo {
    width: 28px;
    height: 23px;
    justify-content: flex-start;
    padding-left: 4px;
    background:
      radial-gradient(circle at 19px 18px, #ffb51c 3px, transparent 4px),
      radial-gradient(circle at 11px 11px, #2a6c9d 4px, #133d63 10px, transparent 11px),
      radial-gradient(circle at 18px 12px, #a81535 8px, transparent 9px);
    color: #fff;
    font-size: 14px;
    font-weight: bold;
    line-height: 20px;
  }
  .ime-mode {
    margin-left: -2px;
    color: #2a66c0;
    font-size: 16px;
    font-weight: bold;
    line-height: 20px;
  }
  .ime-arrow {
    border: 4px solid transparent;
    border-left-color: #aaa;
    border-right: 0;
  }

  .resources {
    flex: none;
    display: flex;
    flex-direction: column;
    gap: 13px;
    width: 28px;
    margin-left: 8px;
    padding: 15px 1px 0 0;
    border-left: 1px solid #8a8678;
    background: #a8a496;
    box-shadow: inset -1px 0 #c9c5b6;
  }
  .tabs {
    display: flex;
    flex-direction: column;
    gap: 1px;
  }
  .tabs button {
    height: 41px;
    background: linear-gradient(90deg, #f8f7f1, #edeadd);
  }
</style>
